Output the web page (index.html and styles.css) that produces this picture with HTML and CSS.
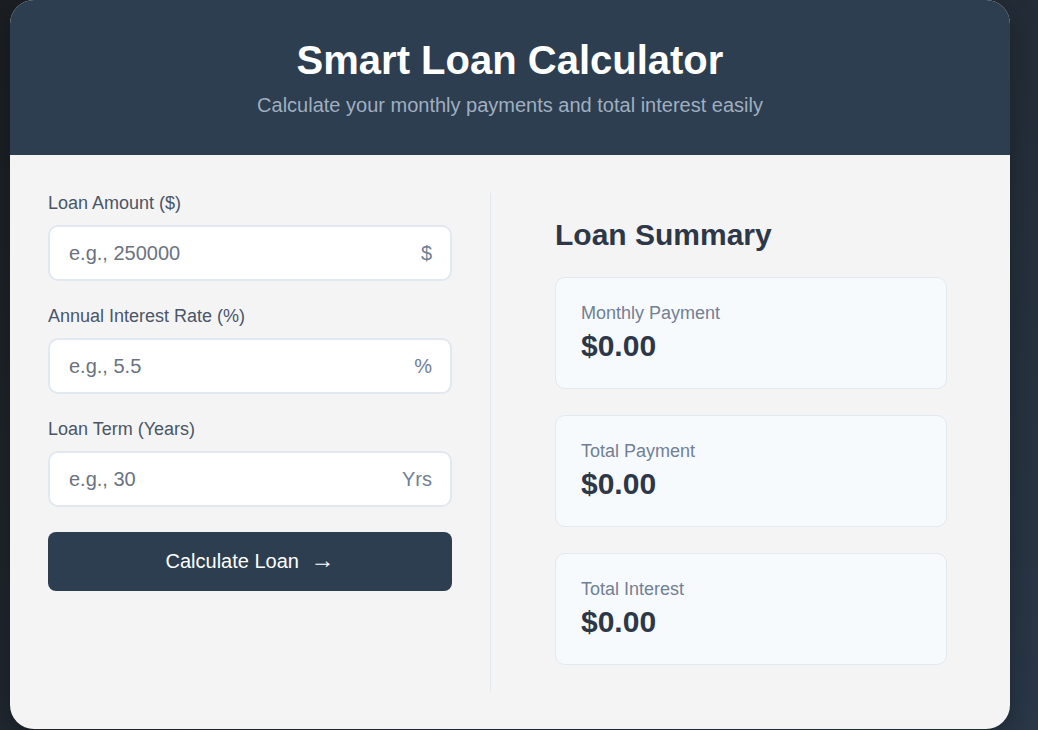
FILE: index.html
```html
<!DOCTYPE html>
<html lang="en">
<head>
<meta charset="utf-8">
<title>Smart Loan Calculator</title>
<link rel="stylesheet" href="styles.css">
</head>
<body>
  <div class="calculator">
    <header class="header">
      <h1 class="title">Smart Loan Calculator</h1>
      <p class="subtitle">Calculate your monthly payments and total interest easily</p>
    </header>
    <main class="content">
      <section class="form-col">
        <div class="field">
          <label class="field-label" for="amount">Loan Amount ($)</label>
          <div class="input-wrap">
            <input class="input" id="amount" type="text" placeholder="e.g., 250000">
            <span class="suffix">$</span>
          </div>
        </div>
        <div class="field">
          <label class="field-label" for="rate">Annual Interest Rate (%)</label>
          <div class="input-wrap">
            <input class="input" id="rate" type="text" placeholder="e.g., 5.5">
            <span class="suffix">%</span>
          </div>
        </div>
        <div class="field">
          <label class="field-label" for="term">Loan Term (Years)</label>
          <div class="input-wrap">
            <input class="input" id="term" type="text" placeholder="e.g., 30">
            <span class="suffix">Yrs</span>
          </div>
        </div>
        <button class="btn" type="button">Calculate Loan <span class="arrow">→</span></button>
      </section>
      <section class="summary-col">
        <h2 class="summary-title">Loan Summary</h2>
        <div class="result-card">
          <div class="result-label">Monthly Payment</div>
          <div class="result-value">$0.00</div>
        </div>
        <div class="result-card">
          <div class="result-label">Total Payment</div>
          <div class="result-value">$0.00</div>
        </div>
        <div class="result-card">
          <div class="result-label">Total Interest</div>
          <div class="result-value">$0.00</div>
        </div>
      </section>
    </main>
  </div>
</body>
</html>
```

FILE: styles.css
```css
* {
  box-sizing: border-box;
}

html, body {
  height: 100%;
}

body {
  margin: 0;
  padding: 0 28px 0 10px;
  font-family: "Liberation Sans", Arial, sans-serif;
  background: linear-gradient(135deg, #1b1e22 0%, #222a33 50%, #2a3848 100%);
  overflow: hidden;
}

.calculator {
  width: 1000px;
  height: 729px;
  background: #f4f4f4;
  border-radius: 24px;
  overflow: hidden;
  box-shadow: 0 10px 30px rgba(0, 0, 0, 0.3);
  display: flex;
  flex-direction: column;
}

.header {
  background: #2c3e50;
  color: #fff;
  text-align: center;
  padding: 37px 20px 38px;
  height: 155px;
}

.title {
  margin: 0 0 11px;
  font-size: 40px;
  font-weight: 700;
  line-height: 46px;
}

.subtitle {
  margin: 0;
  font-size: 20px;
  line-height: 23px;
  color: #a0aec0;
}

.content {
  flex: 1;
  display: grid;
  grid-template-columns: 443px 442px;
  column-gap: 39px;
  padding: 38px 38px 37px;
}

.form-col {
  padding-right: 38px;
  border-right: 1px solid #e2e8f0;
}

.field {
  margin-bottom: 25px;
}

.field-label {
  display: block;
  font-size: 18px;
  line-height: 21px;
  color: #4a5568;
  margin-bottom: 11px;
}

.input-wrap {
  position: relative;
}

.input {
  display: block;
  width: 100%;
  height: 56px;
  padding: 0 60px 0 19px;
  font-family: inherit;
  font-size: 20px;
  color: #2d3748;
  background: #fff;
  border: 2px solid #e2e8f0;
  border-radius: 10px;
  outline: none;
}

.input::placeholder {
  color: #6b7280;
}

.suffix {
  position: absolute;
  right: 20px;
  top: 50%;
  transform: translateY(-50%);
  font-size: 20px;
  color: #718096;
}

.btn {
  display: block;
  width: 100%;
  height: 59px;
  background: #2c3e50;
  color: #fff;
  border: none;
  border-radius: 8px;
  font-family: inherit;
  font-size: 20px;
  cursor: pointer;
}

.arrow {
  margin-left: 6px;
  font-size: 24px;
  line-height: 20px;
}

.summary-col {
  padding: 25px;
}

.summary-title {
  margin: 0 0 25px;
  font-size: 30px;
  line-height: 34px;
  font-weight: 700;
  color: #2d3748;
}

.result-card {
  background: #f7fafc;
  border: 1px solid #e2e8f0;
  border-radius: 10px;
  padding: 25px;
  margin-bottom: 26px;
}

.result-card:last-child {
  margin-bottom: 0;
}

.result-label {
  font-size: 18px;
  line-height: 21px;
  color: #718096;
  margin-bottom: 5px;
}

.result-value {
  font-size: 30px;
  line-height: 34px;
  font-weight: 700;
  color: #2d3748;
}
```
